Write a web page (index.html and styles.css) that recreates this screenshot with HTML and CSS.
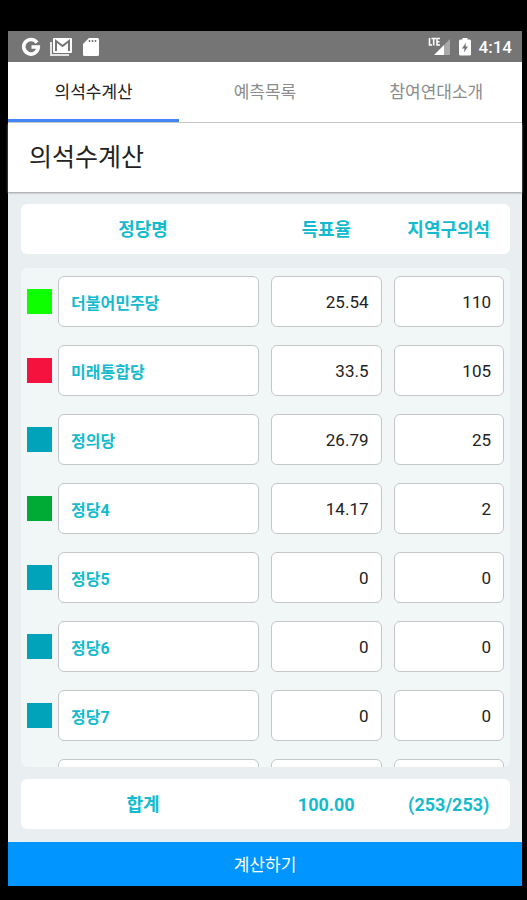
FILE: index.html
```
<!DOCTYPE html>
<html lang="ko">
<head>
  <meta charset="UTF-8">
  <meta name="viewport" content="width=device-width, initial-scale=1.0">
  <title>의석수계산</title>
  <link rel="stylesheet" href="styles.css">
</head>
<body>
  <div class="app">
    <div class="status-bar">
      <svg width="20" height="20" viewBox="0 0 20 20"><path d="M16 5.6A7.3 7.3 0 1 0 17.3 10H10.5" fill="none" stroke="#fff" stroke-width="3.6"/></svg>
      <svg class="mail-icon" width="24" height="20" viewBox="0 0 24 20">
        <path d="M2 5V18H20" fill="none" stroke="#e4e4e4" stroke-width="2"/>
        <rect x="4" y="1" width="19" height="15" rx="1" fill="#fff"/>
        <path d="M7 14V4L13.500 9L20 4V14" fill="none" stroke="#757575" stroke-width="2"/>
      </svg>
      <svg class="card-icon" width="16" height="20" viewBox="0 0 16 20">
        <path d="M6 1H14.500Q16 1 16 2.500V17.500Q16 19 14.500 19H1.500Q0 19 0 17.500V7Z" fill="#fff"/>
        <path d="M6.500 3V5M9.500 3V5M12.500 3V5" stroke="#757575" stroke-width="1.500"/>
      </svg>
      <div class="status-right">
        <svg width="24" height="20" viewBox="0 0 24 20">
          <path d="M23 2V18H17V8Z" fill="#a8a8a8"/>
          <path d="M17 8V18H7Z" fill="#fff"/>
          <path d="M2.500 1V8H5M4.500 1.500H9M6.700 1.500V8.500M13 1.500H10V8H13M10 4.700H12.500" fill="none" stroke="#fff" stroke-width="1.600"/>
        </svg>
        <svg width="12" height="20" viewBox="0 0 12 20">
          <path d="M3.500 1H8.500V2.500H10.500Q12 2.500 12 4V17Q12 18.500 10.500 18.500H1.500Q0 18.500 0 17V4Q0 2.500 1.500 2.500H3.500Z" fill="#fff"/>
          <path d="M7 5.500L3 11.500H5.500L5 15.500L9 9.500H6.500Z" fill="#757575"/>
        </svg>
        <span>4:14</span>
      </div>
    </div>

    <nav class="tabs">
      <a href="#calc" class="active">의석수계산</a>
      <a href="#list">예측목록</a>
      <a href="#about">참여연대소개</a>
    </nav>

    <h1>의석수계산</h1>

    <form class="calc-form" id="calc">
      <table>
        <thead>
          <tr>
            <th>정당명</th>
            <th>득표율</th>
            <th>지역구의석</th>
          </tr>
        </thead>
        <tbody>
          <tr>
            <td class="party"><span class="swatch lime"></span><input type="text" aria-label="정당명" value="더불어민주당"></td>
            <td><input type="text" aria-label="득표율" value="25.54"></td>
            <td><input type="text" aria-label="지역구의석" value="110"></td>
          </tr>
          <tr>
            <td class="party"><span class="swatch red"></span><input type="text" aria-label="정당명" value="미래통합당"></td>
            <td><input type="text" aria-label="득표율" value="33.5"></td>
            <td><input type="text" aria-label="지역구의석" value="105"></td>
          </tr>
          <tr>
            <td class="party"><span class="swatch"></span><input type="text" aria-label="정당명" value="정의당"></td>
            <td><input type="text" aria-label="득표율" value="26.79"></td>
            <td><input type="text" aria-label="지역구의석" value="25"></td>
          </tr>
          <tr>
            <td class="party"><span class="swatch green"></span><input type="text" aria-label="정당명" value="정당4"></td>
            <td><input type="text" aria-label="득표율" value="14.17"></td>
            <td><input type="text" aria-label="지역구의석" value="2"></td>
          </tr>
          <tr>
            <td class="party"><span class="swatch"></span><input type="text" aria-label="정당명" value="정당5"></td>
            <td><input type="text" aria-label="득표율" value="0"></td>
            <td><input type="text" aria-label="지역구의석" value="0"></td>
          </tr>
          <tr>
            <td class="party"><span class="swatch"></span><input type="text" aria-label="정당명" value="정당6"></td>
            <td><input type="text" aria-label="득표율" value="0"></td>
            <td><input type="text" aria-label="지역구의석" value="0"></td>
          </tr>
          <tr>
            <td class="party"><span class="swatch"></span><input type="text" aria-label="정당명" value="정당7"></td>
            <td><input type="text" aria-label="득표율" value="0"></td>
            <td><input type="text" aria-label="지역구의석" value="0"></td>
          </tr>
          <tr>
            <td class="party"><span class="swatch"></span><input type="text" aria-label="정당명"></td>
            <td><input type="text" aria-label="득표율"></td>
            <td><input type="text" aria-label="지역구의석"></td>
          </tr>
        </tbody>
        <tfoot>
          <tr>
            <th>합계</th>
            <td>100.00</td>
            <td>(253/253)</td>
          </tr>
        </tfoot>
      </table>
      <button type="submit">계산하기</button>
    </form>
  </div>
</body>
</html>
```
FILE: styles.css
```
* {
  box-sizing: border-box;
}

body {
  margin: 0;
  background-color: #000;
  color: #222;
  font-family: Roboto, "Noto Sans CJK KR", sans-serif;
  font-size: 17px;
}

.app {
  display: flex;
  flex-direction: column;
  height: 100vh;
  padding: 31px 5px 14px 8px;
}

.status-bar {
  display: flex;
  align-items: center;
  height: 31px;
  padding: 0 10px 0 13px;
  background-color: #757575;
  color: #fff;
  font-weight: 500;
  flex-shrink: 0;
}

.mail-icon {
  margin-left: 8px;
}

.card-icon {
  margin-left: 10px;
}

.status-right {
  display: flex;
  align-items: center;
  gap: 8px;
  margin-left: auto;
}

.tabs {
  display: grid;
  grid-template-columns: repeat(3, 1fr);
  height: 61px;
  background-color: #fff;
  border-bottom: 1px solid #c8c8c8;
  flex-shrink: 0;
}

.tabs a {
  display: flex;
  align-items: center;
  justify-content: center;
  border-bottom: 3px solid transparent;
  color: #8c8c8c;
  text-decoration: none;
}

.tabs a.active {
  color: #222;
  border-bottom-color: #4285f4;
}

h1 {
  margin: 0;
  padding: 0 21px;
  height: 69px;
  line-height: 70px;
  background-color: #fff;
  font-size: 25px;
  font-weight: 400;
  box-shadow: 0 1px 2px #999;
  z-index: 1;
  flex-shrink: 0;
}

.calc-form {
  display: flex;
  flex-direction: column;
  flex: 1;
  min-height: 0;
  background-color: #e9eef1;
}

table {
  display: flex;
  flex-direction: column;
  flex: 1;
  min-height: 0;
  padding: 12px 12px 13px 13px;
}

thead,
tfoot {
  display: block;
  height: 50px;
  border-radius: 6px;
  background-color: #fff;
  color: #14bbce;
  font-size: 18px;
  font-weight: 700;
  line-height: 52px;
  text-align: center;
}

tbody {
  display: block;
  flex: 1;
  min-height: 0;
  margin: 14px 0 12px;
  padding: 8px 0;
  border-radius: 6px;
  background-color: #f1f6f7;
  overflow-y: auto;
  scrollbar-width: none;
}

tr {
  display: grid;
  grid-template-columns: 21fr 10fr 10fr;
  column-gap: 12px;
  padding: 0 6px;
}

tbody tr {
  margin-bottom: 18px;
}

th,
td {
  padding: 0;
}

.party {
  display: flex;
  align-items: center;
  gap: 6px;
}

.swatch {
  width: 25px;
  height: 25px;
  background-color: #00a3ba;
  flex-shrink: 0;
}

.swatch.lime {
  background-color: #0dff00;
}

.swatch.red {
  background-color: #f5123f;
}

.swatch.green {
  background-color: #00ab35;
}

input {
  display: block;
  width: 100%;
  min-width: 0;
  height: 51px;
  padding: 0 12px;
  border: 1px solid #c4c7c8;
  border-radius: 6px;
  background-color: #fff;
  color: #222;
  font: inherit;
  text-align: right;
}

.party input {
  color: #14bbce;
  font-size: 16px;
  font-weight: 700;
  text-align: left;
}

button {
  height: 44px;
  padding: 0 0 2px;
  border: none;
  background-color: #0095ff;
  color: #fff;
  font: inherit;
  cursor: pointer;
  flex-shrink: 0;
}
```
